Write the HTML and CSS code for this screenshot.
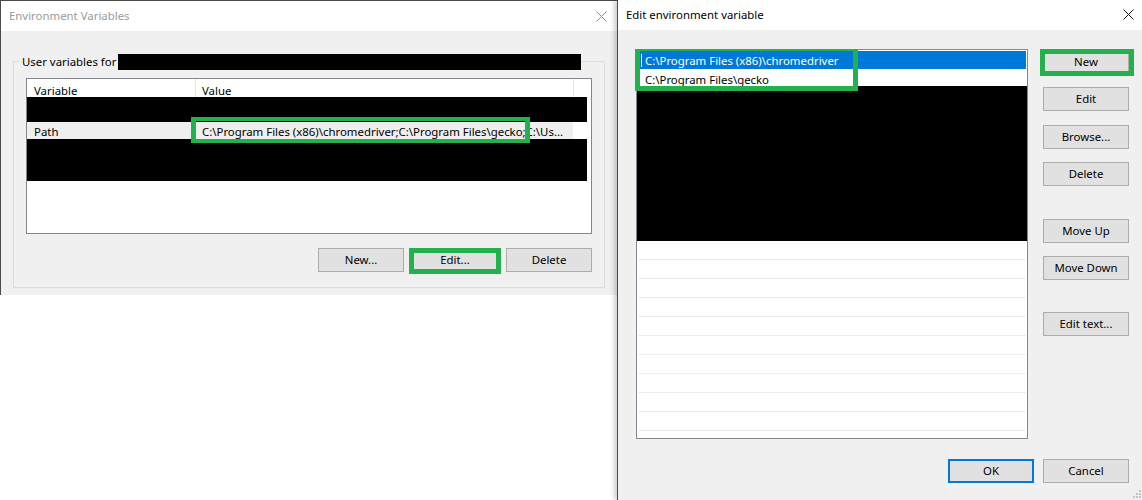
FILE: index.html
```html
<!DOCTYPE html>
<html>
<head>
<meta charset="utf-8">
<link rel="stylesheet" href="styles.css">
</head>
<body>
<div class="screen">
  <section class="dlg dlg-env">
    <header class="titlebar">
      <span class="title">Environment Variables</span>
      <svg class="close" width="11" height="11" viewBox="0 0 11 11"><path d="M0.5 0.5L10.5 10.5M10.5 0.5L0.5 10.5" stroke="currentColor" stroke-width="1" fill="none"/></svg>
    </header>
    <div class="dlg-body">
      <fieldset class="group">
        <legend class="group-label"><span class="label-text">User variables for</span><span class="redact redact-user"></span></legend>
        <div class="listview">
          <div class="lv-head">
            <div class="col col-var">Variable</div>
            <div class="col col-val">Value</div>
          </div>
          <div class="redact redact-a"></div>
          <div class="lv-row">
            <div class="cell cell-var">Path</div>
            <div class="cell cell-val">C:\Program Files (x86)\chromedriver;C:\Program Files\gecko;C:\Us...</div>
          </div>
          <div class="redact redact-b"></div>
          <span class="mark mark-path"></span>
        </div>
        <div class="btn-row">
          <button class="btn">New...</button>
          <button class="btn marked-edit">Edit...</button>
          <button class="btn">Delete</button>
        </div>
      </fieldset>
    </div>
  </section>

  <section class="dlg dlg-edit">
    <header class="titlebar">
      <span class="title">Edit environment variable</span>
      <svg class="close" width="11" height="11" viewBox="0 0 11 11"><path d="M0.5 0.5L10.5 10.5M10.5 0.5L0.5 10.5" stroke="currentColor" stroke-width="1" fill="none"/></svg>
    </header>
    <div class="dlg-body">
      <div class="main">
        <div class="list-wrap">
          <div class="listbox">
            <div class="item item-sel"><span class="caret"></span>C:\Program Files (x86)\chromedriver</div>
            <div class="item item-2">C:\Program Files\gecko</div>
            <div class="redact redact-list"></div>
            <div class="item-empty"></div>
            <div class="item-empty"></div>
            <div class="item-empty"></div>
            <div class="item-empty"></div>
            <div class="item-empty"></div>
            <div class="item-empty"></div>
            <div class="item-empty"></div>
            <div class="item-empty"></div>
            <div class="item-empty"></div>
            <div class="item-empty"></div>
            <div class="item-empty"></div>
          </div>
          <span class="mark mark-items"></span>
        </div>
        <div class="side-btns">
          <button class="btn b-new marked-new">New</button>
          <button class="btn b-edit">Edit</button>
          <button class="btn b-browse">Browse...</button>
          <button class="btn b-delete">Delete</button>
          <button class="btn b-up">Move Up</button>
          <button class="btn b-down">Move Down</button>
          <button class="btn b-text">Edit text...</button>
        </div>
      </div>
      <div class="footer">
        <button class="btn btn-default">OK</button>
        <button class="btn">Cancel</button>
      </div>
    </div>
    <svg class="grip" width="8" height="8" viewBox="0 0 8 8">
      <rect x="6" y="0" width="2" height="2" fill="#c4c4c4"/>
      <rect x="3" y="3" width="2" height="2" fill="#c4c4c4"/>
      <rect x="6" y="3" width="2" height="2" fill="#c4c4c4"/>
      <rect x="0" y="6" width="2" height="2" fill="#c4c4c4"/>
      <rect x="3" y="6" width="2" height="2" fill="#c4c4c4"/>
      <rect x="6" y="6" width="2" height="2" fill="#c4c4c4"/>
    </svg>
  </section>
</div>
</body>
</html>
```

FILE: styles.css
```css
* { box-sizing: border-box; }
html, body { margin: 0; padding: 0; }
body {
  background: #ffffff;
  font-family: "Noto Sans", "Segoe UI", sans-serif;
  font-size: 11.4px;
  color: #000;
  width: 1142px;
  height: 500px;
  overflow: hidden;
}
.screen { display: flex; align-items: flex-start; }

.dlg { background: #f0f0f0; display: flex; flex-direction: column; }

.titlebar {
  height: 30px;
  flex: none;
  background: #fff;
  display: flex;
  align-items: center;
  justify-content: space-between;
  padding-left: 8px;
}
.title { line-height: 16px; }
.close { display: block; }

/* ---------- left dialog ---------- */
.dlg-env {
  width: 617px;
  height: 295px;
  border-left: 1px solid #4a4a4a;
  border-top: 1px solid #4a4a4a;
}
.dlg-env .titlebar { color: #9a9a9a; padding-right: 10px; }
.dlg-env .close { color: #8c8c8c; margin-top: 1px; }

.dlg-env .dlg-body { padding: 22px 0 0 12px; }

.group {
  margin: 0;
  width: 592px;
  border: 1px solid #dcdcdc;
  padding: 0 12px 15px 12px;
}
.group-label {
  margin-left: -6px;
  padding: 0 0 0 2px;
  width: 561px;
  height: 17px;
  line-height: 17px;
  display: flex;
  align-items: flex-end;
}
.label-text { line-height: 17px; white-space: nowrap; }
.redact { background: #000; display: block; }
.redact-user { flex: 1; height: 16px; margin-left: 2px; }

.listview {
  position: relative;
  margin-top: 8px;
  width: 566px;
  height: 156px;
  border: 1px solid #828790;
  background: #fff;
}
.lv-head { display: flex; height: 18px; }
.col { line-height: 18px; padding-top: 3px; border-right: 1px solid #e5e5e5; white-space: nowrap; }
.col-var { width: 169px; padding-left: 7px; }
.col-val { width: 378px; padding-left: 6px; }

.redact-a { width: 560px; height: 25px; }
.redact-b { width: 560px; height: 42px; }

.lv-row { display: flex; width: 546px; height: 17px; background: #efefef; line-height: 17px; padding-top: 1px; }
.cell { white-space: nowrap; overflow: hidden; }
.cell-var { width: 169px; padding-left: 7px; }
.cell-val { width: 377px; padding-left: 6px; }

.mark { position: absolute; border: 4px solid #22b14c; pointer-events: none; }
.mark-path { left: 164px; top: 38px; width: 339px; height: 26px; border-left-width: 5px; border-right-width: 5px; }

.btn-row { display: flex; justify-content: flex-end; gap: 8px; margin-top: 14px; }
.btn {
  width: 86px;
  height: 24px;
  padding: 0;
  margin: 0;
  background: #e1e1e1;
  border: 1px solid #adadad;
  font: inherit;
  color: #000;
  line-height: 20px;
  text-align: center;
}
.marked-edit { position: relative; }
.marked-edit::after {
  content: "";
  position: absolute;
  left: -4px; right: -4px; top: -1px; bottom: -3px;
  border: 5px solid #22b14c;
}

/* ---------- right dialog ---------- */
.dlg-edit {
  position: relative;
  width: 525px;
  height: 500px;
  border-left: 1px solid #4a4a4a;
  box-shadow: -3px 0 4px rgba(0, 0, 0, 0.18);
}
.dlg-edit .titlebar { padding-right: 8px; }
.dlg-edit .close { color: #111; margin-top: -1px; }

.dlg-edit .dlg-body { padding: 19px 13px 0 18px; }
.main { display: flex; align-items: flex-start; }
.list-wrap { position: relative; flex: none; }
.listbox {
  width: 392px;
  height: 390px;
  border: 1px solid #828790;
  background: #fff;
  overflow: hidden;
}
.item { height: 17px; line-height: 17px; padding: 2px 0 0 8px; white-space: nowrap; }
.item-sel {
  margin: 1px 1px 0 1px;
  height: 18px;
  line-height: 18px;
  padding: 1px 0 0 3px;
  background: #0078d7;
  color: #fff;
  display: flex;
  align-items: center;
}
.caret { width: 1px; height: 13px; background: #fff; margin-right: 3px; flex: none; }
.redact-list { height: 155px; }
.item-empty { height: 19px; margin: 0 1px; border-bottom: 1px solid #ececec; }
.mark-items { left: -1px; top: 0; width: 223px; height: 42px; border-width: 2px 5px 5px 5px; }

.side-btns { display: flex; flex-direction: column; margin-left: 15px; }
.b-new { margin-top: 1px; }
.b-edit { margin-top: 13px; }
.b-browse { margin-top: 14px; }
.b-delete { margin-top: 13px; }
.b-up { margin-top: 33px; }
.b-down { margin-top: 13px; }
.b-text { margin-top: 32px; }
.marked-new { position: relative; }
.marked-new::after {
  content: "";
  position: absolute;
  left: -4px; right: -6px; top: -2px; bottom: -3px;
  border: 5px solid #22b14c;
}

.footer { display: flex; justify-content: flex-end; gap: 9px; margin-top: 20px; }
.btn-default { border: 2px solid #0078d7; }

.grip { position: absolute; right: 1px; bottom: 2px; }
```
